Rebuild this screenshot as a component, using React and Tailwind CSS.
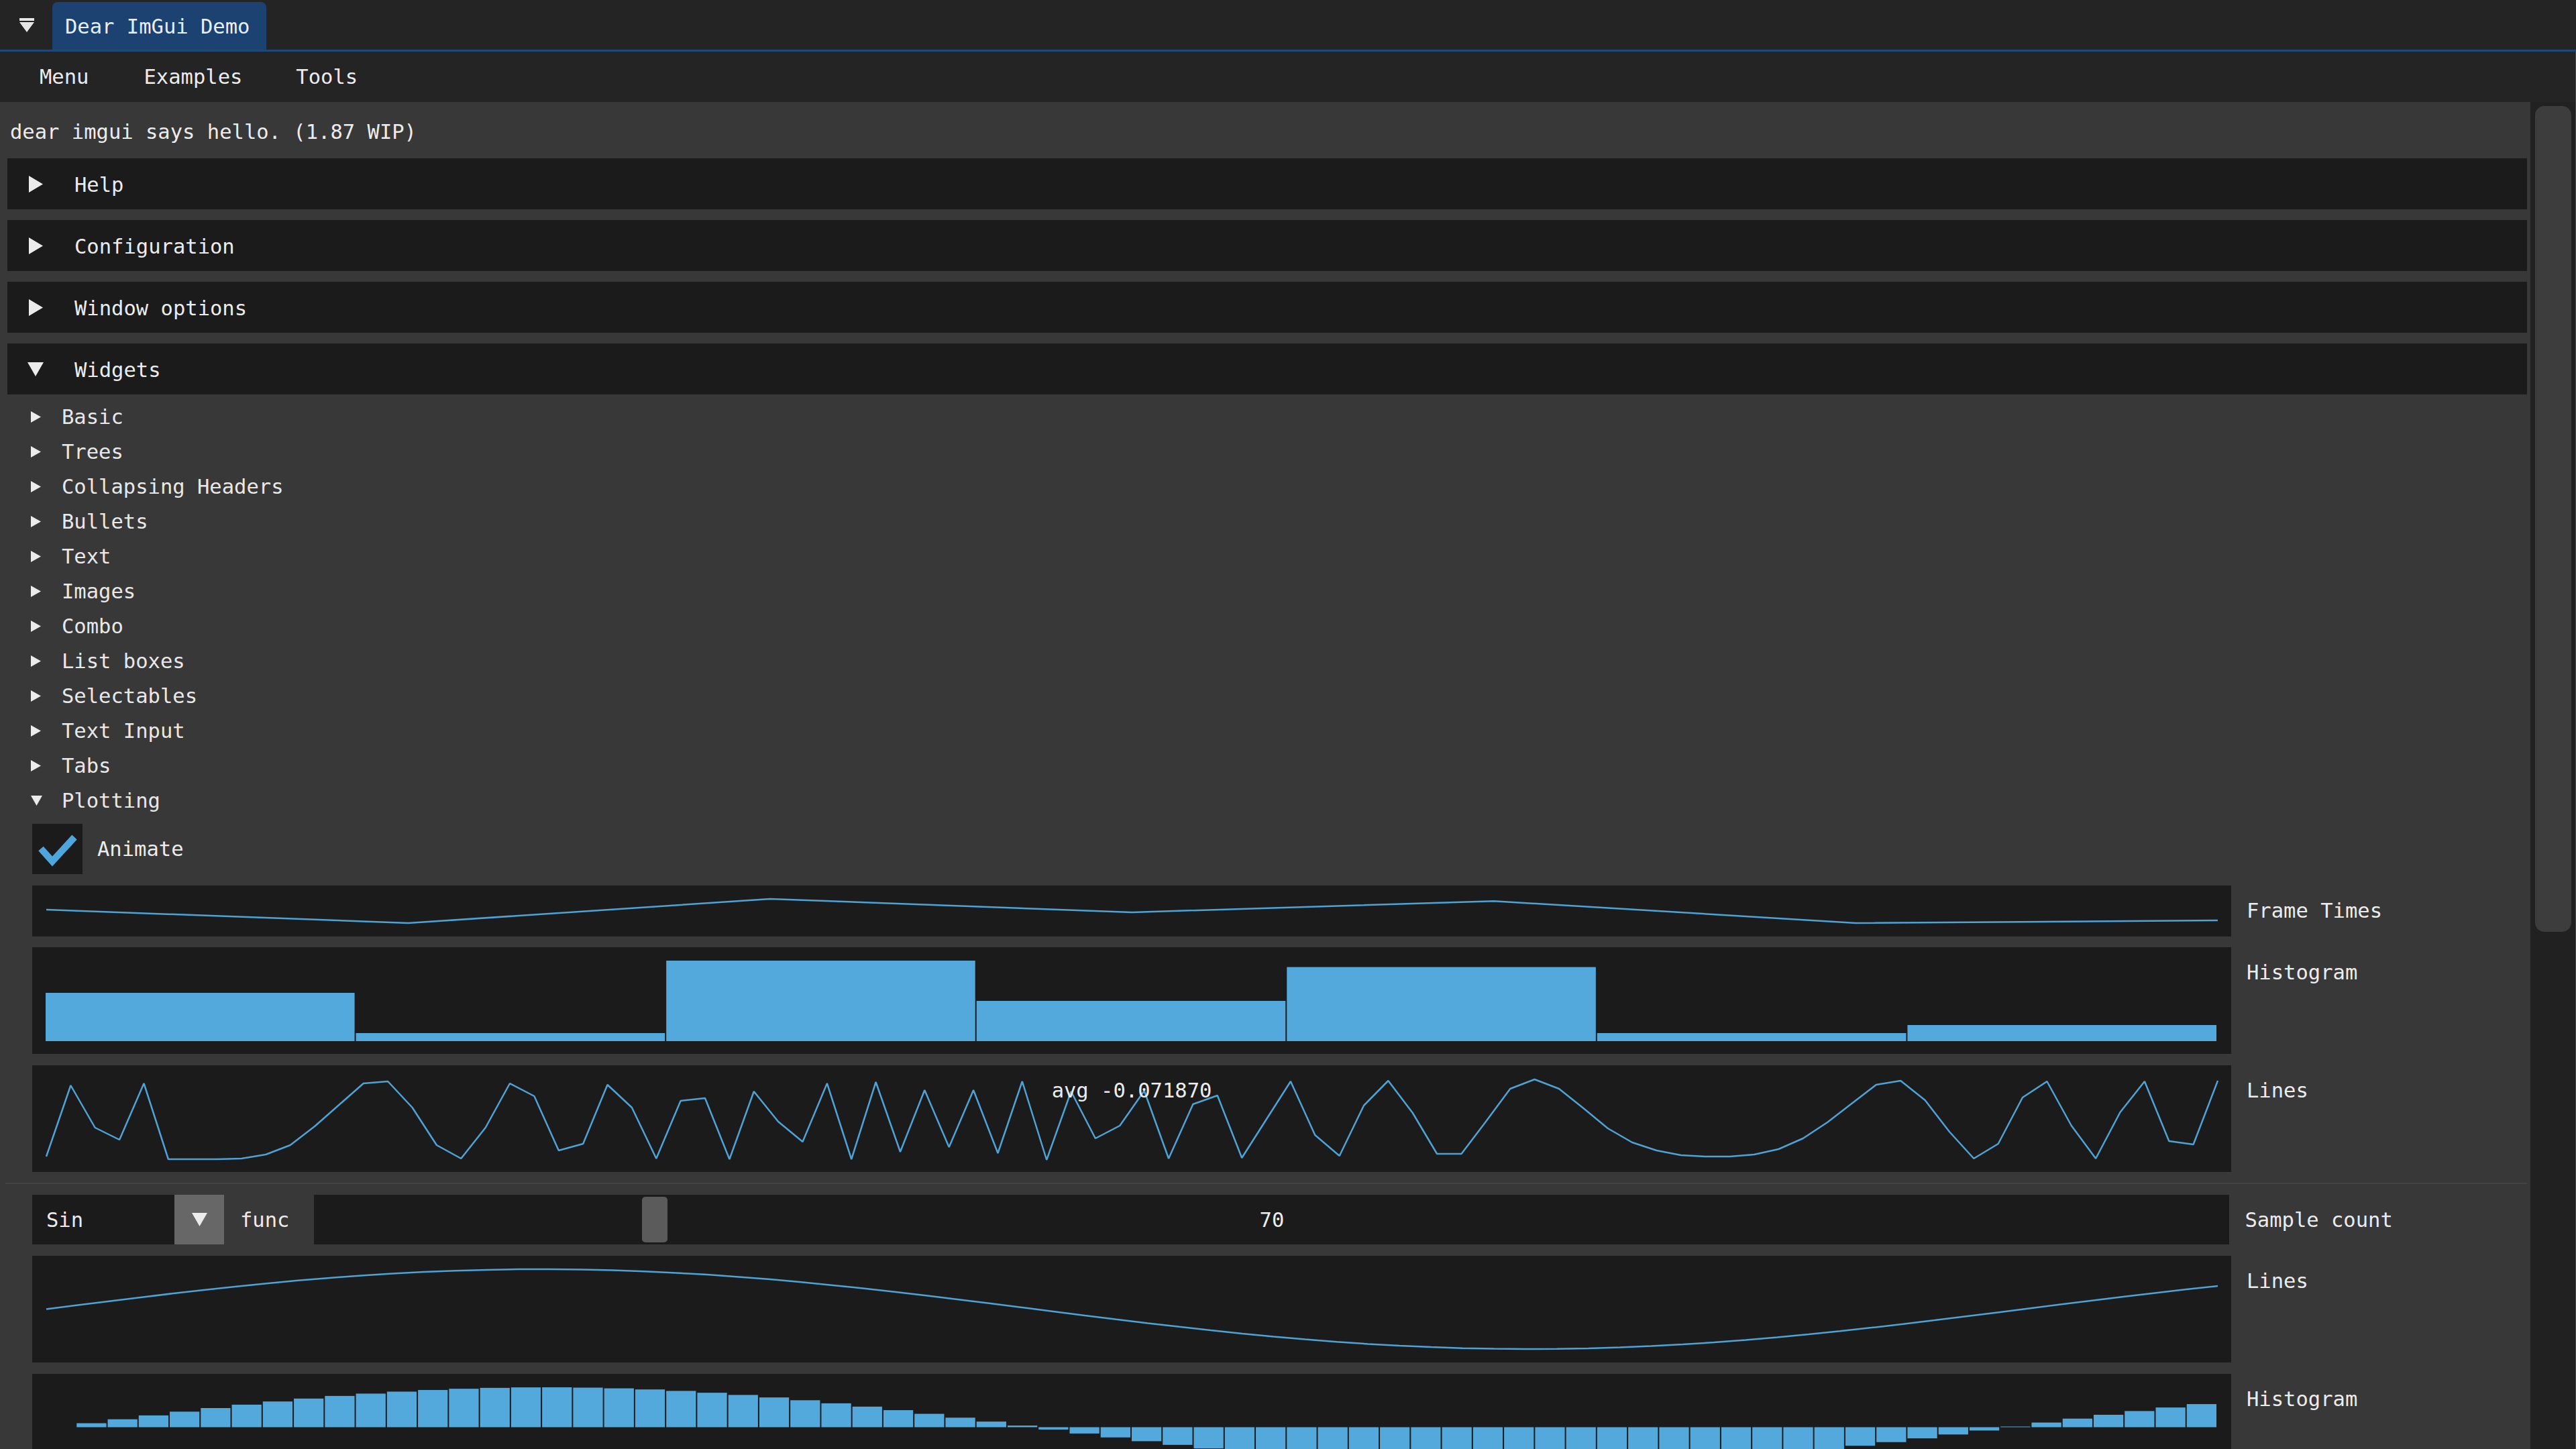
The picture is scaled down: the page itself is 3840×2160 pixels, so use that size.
import React from "react";

const LINE_Y = [
  1724, 1618, 1681, 1699, 1615, 1728, 1728, 1728, 1727, 1721,
  1707, 1679, 1647, 1615, 1612, 1651, 1707, 1727, 1681, 1615,
  1634, 1715, 1705, 1617, 1651, 1727, 1641, 1637, 1728, 1627,
  1672, 1702, 1615, 1728, 1613, 1717, 1625, 1710, 1625, 1719,
  1612, 1729, 1627, 1697, 1678, 1626, 1727, 1646, 1633, 1726,
  1669, 1612, 1692, 1723, 1648, 1611, 1659, 1720, 1720, 1672,
  1623, 1609, 1623, 1652, 1682, 1703, 1715, 1722, 1724, 1724,
  1721, 1713, 1697, 1673, 1645, 1617, 1611, 1640, 1687, 1727,
  1705, 1636, 1612, 1678, 1727, 1658, 1612, 1701, 1706, 1611,
];

const ARR = [0.6, 0.1, 1.0, 0.5, 0.92, 0.1, 0.2];
const PW = 3278;
const LINE_COLOR = "#4ea3d6";
const BAR_COLOR = "#53a9dc";

function TriRight({ w, h }) {
  return (
    <svg width={w} height={h} viewBox={`0 0 ${w} ${h}`} className="block shrink-0">
      <polygon points={`0,0 ${w},${h / 2} 0,${h}`} fill="#ececec" />
    </svg>
  );
}

function TriDown({ w, h, color = "#ececec" }) {
  return (
    <svg width={w} height={h} viewBox={`0 0 ${w} ${h}`} className="block shrink-0">
      <polygon points={`0,0 ${w},0 ${w / 2},${h}`} fill={color} />
    </svg>
  );
}

function Header({ label, open }) {
  return (
    <div className="flex items-center h-[76px] w-[3756px] ml-[11px] bg-[#1b1b1b] shrink-0 mt-[16px] first:mt-[22px]">
      <div className={`w-[100px] shrink-0 flex items-center ${open ? "pl-[30px]" : "pl-[32px]"}`}>
        {open ? <TriDown w={24} h={21} /> : <TriRight w={21} h={25} />}
      </div>
      <span className="mt-[3px] whitespace-pre">{label}</span>
    </div>
  );
}

function TreeItem({ label, open, first }) {
  return (
    <div className={`flex items-center h-[35px] shrink-0 ${first ? "mt-[16px]" : "mt-[17px]"}`}>
      <div className="w-[92px] shrink-0 flex items-center pl-[46px]">
        {open ? <TriDown w={17} h={15} /> : <TriRight w={15} h={17} />}
      </div>
      <span className="whitespace-pre text-[#e8e8e8]">{label}</span>
    </div>
  );
}

function Label({ children }) {
  return <span className="ml-[23px] mt-[20px] h-[35px] whitespace-pre">{children}</span>;
}

function FrameTimes() {
  const pts = ARR.map((v, i) => `${21 + i * 539.5},${56 - ((v - 0.1) / 0.9) * 36}`).join(" ");
  return (
    <div className="w-[3278px] h-[76px] bg-[#1b1b1b] shrink-0">
      <svg width={PW} height={76} className="block">
        <polyline points={pts} fill="none" stroke={LINE_COLOR} strokeWidth="2.5" strokeLinejoin="bevel" />
      </svg>
    </div>
  );
}

function Histogram1() {
  const bw = 3238 / 7;
  return (
    <div className="w-[3278px] h-[159px] bg-[#1b1b1b] shrink-0">
      <svg width={PW} height={159} className="block">
        {ARR.map((v, i) => (
          <rect key={i} x={20 + i * bw} y={140 - v * 120} width={bw - 2} height={v * 120} fill={BAR_COLOR} />
        ))}
      </svg>
    </div>
  );
}

function Lines1() {
  const step = 3237 / 89;
  const pts = LINE_Y.map((y, i) => `${(21 + i * step).toFixed(1)},${y - 1588}`).join(" ");
  return (
    <div className="relative w-[3278px] h-[159px] bg-[#1b1b1b] shrink-0">
      <svg width={PW} height={159} className="block">
        <polyline points={pts} fill="none" stroke={LINE_COLOR} strokeWidth="2.5" strokeLinejoin="bevel" />
      </svg>
      <div className="absolute left-0 right-0 top-[20px] flex justify-center">
        <span className="h-[35px] whitespace-pre">avg -0.071870</span>
      </div>
    </div>
  );
}

function Lines2() {
  const n = 70;
  const step = 3237 / (n - 1);
  const pts = Array.from({ length: n }, (_, i) => `${(21 + i * step).toFixed(1)},${(79.5 - Math.sin(i * 0.1) * 59.5).toFixed(1)}`).join(" ");
  return (
    <div className="w-[3278px] h-[159px] bg-[#1b1b1b] shrink-0">
      <svg width={PW} height={159} className="block">
        <polyline points={pts} fill="none" stroke={LINE_COLOR} strokeWidth="2.5" strokeLinejoin="bevel" />
      </svg>
    </div>
  );
}

function Histogram2() {
  const n = 70;
  const bw = 3238 / n;
  return (
    <div className="w-[3278px] h-[159px] bg-[#1b1b1b] shrink-0">
      <svg width={PW} height={159} className="block">
        {Array.from({ length: n }, (_, i) => {
          const h = Math.sin(i * 0.1) * 59.5;
          const y = h >= 0 ? 79.5 - h : 79.5;
          return <rect key={i} x={20 + i * bw} y={y} width={bw - 2} height={Math.abs(h)} fill={BAR_COLOR} />;
        })}
      </svg>
    </div>
  );
}

const TREE = [
  "Basic",
  "Trees",
  "Collapsing Headers",
  "Bullets",
  "Text",
  "Images",
  "Combo",
  "List boxes",
  "Selectables",
  "Text Input",
  "Tabs",
];

export default function App() {
  return (
    <div className="w-[3840px] h-[2160px] overflow-hidden flex flex-col bg-[#242424] text-[#ececec] font-['DejaVu_Sans_Mono','Liberation_Mono',monospace] text-[30.5px] leading-[35px]">
      {/* Title bar */}
      <div className="h-[74px] flex items-end shrink-0 bg-[#242424]">
        <div className="self-start mt-[27px] ml-[29px]">
          <svg width="22" height="21" viewBox="0 0 22 21" className="block">
            <rect x="0" y="0" width="22" height="4" fill="#e6e6e6" />
            <polygon points="0,6 22,6 11,21" fill="#e6e6e6" />
          </svg>
        </div>
        <div className="ml-[27px] w-[319px] h-[71px] rounded-t-[8px] bg-[#1c4271] pl-[19px] pt-[19px]">
          <span className="h-[35px] whitespace-pre text-[#e8eef5]">Dear ImGui Demo</span>
        </div>
      </div>
      <div className="h-[3px] bg-[#1f4877] shrink-0" />

      <div className="flex-1 min-h-0 flex flex-col border-r border-[#4a4a4a]">
        {/* Menu bar */}
        <div className="h-[75px] flex items-center shrink-0 bg-[#242424]">
          <span className="ml-[59px]">Menu</span>
          <span className="ml-[82px]">Examples</span>
          <span className="ml-[80px]">Tools</span>
        </div>

        <div className="flex-1 min-h-0 flex">
          {/* Content */}
          <div className="w-[3772px] shrink-0 bg-[#383838] overflow-hidden flex flex-col">
            <div className="mt-[27px] ml-[15px] h-[35px] shrink-0 whitespace-pre">dear imgui says hello. (1.87 WIP)</div>

            <div className="flex flex-col shrink-0">
              <Header label="Help" />
              <Header label="Configuration" />
              <Header label="Window options" />
              <Header label="Widgets" open />
            </div>

            {TREE.map((t, i) => (
              <TreeItem key={t} label={t} first={i === 0} />
            ))}
            <TreeItem label="Plotting" open />

            {/* Animate checkbox */}
            <div className="flex items-center mt-[17px] ml-[48px] shrink-0">
              <div className="w-[75px] h-[75px] bg-[#1b1b1b] shrink-0">
                <svg width="75" height="75" viewBox="0 0 75 75" className="block">
                  <polyline points="13,37 30,56 63,20" fill="none" stroke="#4ea6dc" strokeWidth="10" strokeLinejoin="miter" />
                </svg>
              </div>
              <span className="ml-[22px] h-[35px]">Animate</span>
            </div>

            <div className="flex items-start mt-[17px] ml-[48px] shrink-0">
              <FrameTimes />
              <Label>Frame Times</Label>
            </div>

            <div className="flex items-start mt-[16px] ml-[48px] shrink-0">
              <Histogram1 />
              <Label>Histogram</Label>
            </div>

            <div className="flex items-start mt-[17px] ml-[48px] shrink-0">
              <Lines1 />
              <Label>Lines</Label>
            </div>

            <div className="mt-[16px] ml-[8px] w-[3759px] h-[2px] bg-[#444444] shrink-0" />

            {/* func / sample count row */}
            <div className="flex items-start mt-[16px] ml-[48px] shrink-0">
              <div className="flex w-[286px] h-[74px] shrink-0">
                <div className="flex-1 bg-[#1b1b1b] pl-[21px] pt-[20px]">
                  <span className="h-[35px]">Sin</span>
                </div>
                <div className="w-[74px] h-[74px] bg-[#676767] flex items-center justify-center">
                  <TriDown w={23} h={20} />
                </div>
              </div>
              <span className="ml-[24px] mt-[20px] h-[35px]">func</span>
              <div className="ml-[37px] w-[2855px] h-[74px] bg-[#1b1b1b] relative shrink-0 flex items-start justify-center pt-[20px]">
                <div className="absolute left-[489px] top-[3px] w-[38px] h-[68px] rounded-[5px] bg-[#5b5b5b]" />
                <span className="h-[35px] relative">70</span>
              </div>
              <Label>Sample count</Label>
            </div>

            <div className="flex items-start mt-[17px] ml-[48px] shrink-0">
              <Lines2 />
              <Label>Lines</Label>
            </div>

            <div className="flex items-start mt-[17px] ml-[48px] shrink-0">
              <Histogram2 />
              <Label>Histogram</Label>
            </div>
          </div>

          {/* Scrollbar */}
          <div className="w-[67px] shrink-0 bg-[#212121]">
            <div className="mt-[6px] ml-[7px] w-[54px] h-[1231px] rounded-[14px] bg-[#3d3d3d]" />
          </div>
        </div>
      </div>
    </div>
  );
}
